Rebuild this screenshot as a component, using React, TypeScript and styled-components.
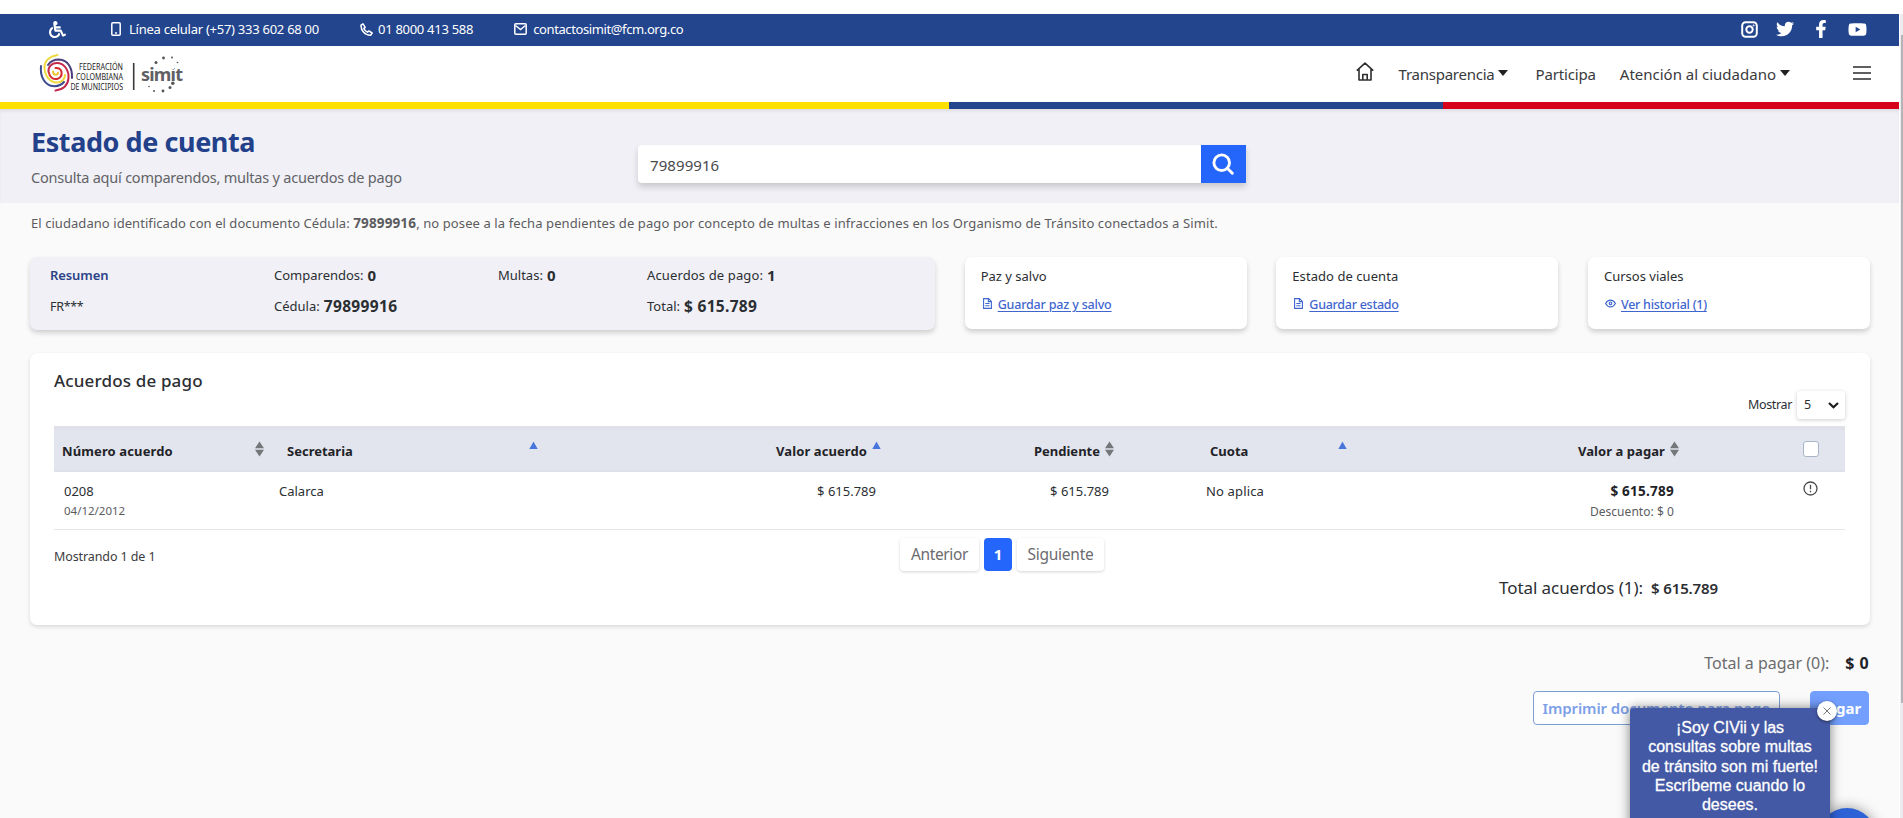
import React from "react";
import styled, { createGlobalStyle, css } from "styled-components";
import { FaWheelchair, FaTwitter, FaFacebookF, FaYoutube } from "react-icons/fa";

const GlobalStyle = createGlobalStyle`
  * { box-sizing: border-box; }
  body { margin: 0; background: #fff; overflow: hidden; }
  button { font: inherit; border: 0; padding: 0; background: none; }
`;

const Screen = styled.div`
  width: 1903px;
  height: 818px;
  display: flex;
  overflow: hidden;
  padding-top: 14px;
  font-family: "Noto Sans", "Open Sans", sans-serif;
  color: #2b2e32;
`;
const Page = styled.div`
  position: relative;
  width: 1900px;
  display: flex;
  flex-direction: column;
  background: #fafafa;
  border-right: 1px solid #fff;
`;
const ScrollTrack = styled.div`
  width: 3px;
  background: #ececee;
  padding-top: 21px;
`;
const ScrollThumb = styled.div`
  height: 668px;
  margin-left: 1px;
  background: #b4b4b6;
`;

const Text = styled.span<{ $size: number; $weight?: number; $track?: number; $color?: string }>`
  font-size: ${(p) => p.$size}px;
  font-weight: ${(p) => p.$weight ?? 400};
  letter-spacing: ${(p) => p.$track ?? 0}px;
  color: ${(p) => p.$color ?? "inherit"};
  line-height: 1.4;
  white-space: nowrap;
`;

/* ---------- Header ---------- */
const TopBar = styled.div`
  height: 32px;
  background: #22458d;
  color: #fff;
  display: flex;
  align-items: center;
  justify-content: space-between;
  padding: 0 32px 2px 49px;
`;
const Contacts = styled.div`
  display: flex;
  align-items: center;
  svg { display: block; }
`;
const Contact = styled.div<{ $gap: number; $left: number }>`
  display: flex;
  align-items: center;
  gap: ${(p) => p.$gap}px;
  margin-left: ${(p) => p.$left}px;
`;
const Social = styled.div`
  display: flex;
  align-items: center;
  gap: 18px;
  svg { display: block; }
`;
const Nav = styled.div`
  height: 56px;
  background: #fff;
  display: flex;
  align-items: center;
  justify-content: space-between;
  padding: 0 28px 0 38px;
`;
const LogoArt = styled.svg`
  overflow: visible;
`;
const NavLinks = styled.nav`
  display: flex;
  align-items: center;
`;
const HomeIcon = styled.svg`
  margin: -6px 25px 0 0;
`;
const NavItem = styled.a<{ $right: number }>`
  display: flex;
  align-items: center;
  gap: 4px;
  margin-right: ${(p) => p.$right}px;
  color: #3a3a3d;
`;
const Caret = styled.i`
  border: 5px solid transparent;
  border-top: 6px solid #222;
  border-bottom: 0;
  margin-top: -2px;
`;
const Burger = styled.div`
  width: 18px;
  height: 14px;
  display: flex;
  flex-direction: column;
  justify-content: space-between;
  margin-top: -2px;
`;
const BurgerLine = styled.i`
  height: 2px;
  background: #5f5f61;
`;
const Flag = styled.div`
  height: 7px;
  display: grid;
  grid-template-columns: 949px 494px 1fr;
`;
const Stripe = styled.i<{ $color: string }>`
  background: ${(p) => p.$color};
`;

/* ---------- Search banner ---------- */
const Banner = styled.section`
  height: 94px;
  background: #f0f0f6;
  box-shadow: inset 0 3px 4px -2px rgba(0, 0, 0, 0.12);
  display: flex;
  padding-left: 31px;
`;
const BannerTitle = styled.div`
  width: 607px;
  padding-top: 14px;
  display: flex;
  flex-direction: column;
  gap: 6px;
`;
const SearchBox = styled.div`
  width: 608px;
  height: 38px;
  margin-top: 36px;
  display: flex;
  background: #fff;
  border-radius: 4px 0 0 4px;
  box-shadow: 0 4px 6px rgba(0, 0, 0, 0.17);
`;
const SearchValue = styled.div`
  flex: 1;
  display: flex;
  align-items: center;
  padding: 2px 12px 0;
`;
const SearchButton = styled.button`
  width: 45px;
  display: flex;
  align-items: center;
  justify-content: center;
  padding-right: 2px;
  background: #2466fb;
`;

/* ---------- Content ---------- */
const Content = styled.main`
  padding: 0 29px 0 30px;
`;
const Notice = styled.div`
  height: 54px;
  padding: 10px 0 0 1px;
  color: #5c5c5f;
  white-space: nowrap;
  line-height: 18px;
`;
const Cards = styled.div`
  display: flex;
  justify-content: space-between;
`;
const cardBase = css`
  border-radius: 7px;
  box-shadow: 0 3px 5px rgba(0, 0, 0, 0.17);
`;
const Summary = styled.div`
  ${cardBase}
  width: 905px;
  height: 73px;
  background: #f0f0f6;
  padding: 3px 20px 0;
  display: grid;
  grid-template-columns: 224px 224px 149px 1fr;
  grid-auto-rows: 31px;
`;
const SummaryItem = styled.div`
  display: flex;
  align-items: center;
  gap: 4px;
`;
const Card = styled.div`
  ${cardBase}
  width: 282px;
  height: 72px;
  background: #fff;
  padding: 10px 16px 0;
  display: flex;
  flex-direction: column;
  gap: 11px;
`;
const CardLink = styled.a<{ $gap?: number; $left?: number }>`
  display: flex;
  align-items: center;
  gap: ${(p) => p.$gap ?? 6}px;
  padding-left: ${(p) => p.$left ?? 2}px;
  color: #3f66cf;
  svg { display: block; margin-top: -3px; }
  span { text-decoration: underline; text-underline-offset: 2px; }
`;
const Panel = styled.section`
  height: 272px;
  margin-top: 23px;
  background: #fff;
  border-radius: 7px;
  box-shadow: 0 2px 4px rgba(0, 0, 0, 0.13);
  padding: 16px 25px 0 24px;
`;
const PanelHead = styled.div`
  height: 57px;
  display: flex;
  justify-content: space-between;
`;
const PageSize = styled.label`
  height: 28px;
  margin-top: 22px;
  display: flex;
  align-items: center;
  gap: 5px;
`;
const Select = styled.div`
  width: 48px;
  height: 28px;
  padding: 0 6px 0 7px;
  display: flex;
  align-items: center;
  justify-content: space-between;
  border-radius: 3px;
  box-shadow: 0 1px 4px rgba(0, 0, 0, 0.2);
  background: #fff;
`;

const gridColumns = css`
  display: grid;
  grid-template-columns: 225px 266px 343px 232px 233px 331px 161px;
`;
const HeadRow = styled.div`
  ${gridColumns}
  height: 46px;
  background: #e2e5ee;
  border-top: 4px solid #e0e0e8;
  border-bottom: 2px solid #e0e0ea;
  color: #1f2327;
`;
const HeadCell = styled.div<{ $left?: number; $right?: number; $end?: boolean }>`
  display: flex;
  align-items: center;
  justify-content: ${(p) => (p.$end ? "flex-end" : "space-between")};
  gap: 5px;
  padding: 2px ${(p) => p.$right ?? 0}px 0 ${(p) => p.$left ?? 0}px;
`;
const BodyRow = styled.div`
  ${gridColumns}
  height: 58px;
  border-bottom: 1px solid #e6e6e8;
`;
const BodyCell = styled.div<{ $left?: number; $right?: number; $end?: boolean }>`
  display: flex;
  flex-direction: column;
  align-items: ${(p) => (p.$end ? "flex-end" : "flex-start")};
  gap: 3px;
  padding: 10px ${(p) => p.$right ?? 0}px 0 ${(p) => p.$left ?? 0}px;
`;
const SortMark = styled.svg`
  display: block;
  margin-top: -4px;
`;
const Checkbox = styled.i`
  width: 16px;
  height: 16px;
  margin-top: -5px;
  border: 1px solid #a9b6c8;
  border-radius: 3px;
  background: #fff;
`;
const AlertIcon = styled.svg`
  margin-top: -1px;
`;
const PanelFoot = styled.div`
  display: grid;
  grid-template-columns: 846px 1fr;
  height: 41px;
  padding-top: 8px;
`;
const Count = styled.div`
  padding-top: 10px;
  display: flex;
  align-items: flex-start;
`;
const Pager = styled.div`
  display: flex;
  gap: 5px;
`;
const PageButton = styled.button<{ $width: number; $active?: boolean }>`
  width: ${(p) => p.$width}px;
  height: 33px;
  display: flex;
  align-items: center;
  justify-content: center;
  border-radius: 4px;
  background: ${(p) => (p.$active ? "#2466fb" : "#fff")};
  box-shadow: ${(p) => (p.$active ? "none" : "0 1px 3px rgba(0,0,0,0.17)")};
`;
const PanelTotal = styled.div`
  height: 34px;
  padding-right: 127px;
  display: flex;
  align-items: center;
  justify-content: flex-end;
  gap: 8px;
`;
const GrandTotal = styled.div`
  height: 66px;
  padding: 10px 1px 0 0;
  display: flex;
  align-items: center;
  justify-content: flex-end;
  gap: 16px;
`;
const Actions = styled.div`
  display: flex;
  justify-content: flex-end;
  padding-right: 1px;
  gap: 30px;
`;
const ActionButton = styled.button<{ $width: number; $solid?: boolean }>`
  width: ${(p) => p.$width}px;
  height: 34px;
  border-radius: 4px;
  border: 1px solid ${(p) => (p.$solid ? "#739fff" : "#7f9ed2")};
  background: ${(p) => (p.$solid ? "#739fff" : "#fff")};
  color: ${(p) => (p.$solid ? "#fff" : "#7d9fe8")};
`;

/* ---------- Chat bubble ---------- */
const ChatTip = styled.aside`
  position: absolute;
  left: 1630px;
  top: 694px;
  width: 200px;
  height: 130px;
  padding: 10px 8px 0;
  background: #4459a5;
  border-radius: 4px;
  box-shadow: 0 0 12px rgba(0, 0, 0, 0.5);
  color: #fff;
  font: 16px/19.3px "Liberation Sans", Arial, sans-serif;
  text-align: center;
`;
const ChatLine = styled.div`
  white-space: nowrap;
  -webkit-text-stroke: 0.3px #fff;
`;
const ChatClose = styled.button`
  position: absolute;
  right: -7px;
  top: -7px;
  width: 20px;
  height: 20px;
  display: flex;
  align-items: center;
  justify-content: center;
  border-radius: 50%;
  background: #fff;
  box-shadow: 0 1px 3px rgba(0, 0, 0, 0.5);
`;
const ChatLauncher = styled.div`
  position: absolute;
  left: 1818px;
  top: 794px;
  width: 58px;
  height: 58px;
  border-radius: 50%;
  background: #2d62d6;
  box-shadow: 0 0 14px rgba(0, 0, 0, 0.4);
`;

const Logo = () => (
  <LogoArt width="150" height="48" viewBox="38 50 150 48">
    <g fill="none" strokeWidth="2" strokeLinecap="round">
      <path d="M57.500 55C50 56 44.500 60.500 44.500 67C44.500 76 50 82.500 57 82.500C62 82.500 65 79 65 75" stroke="#ecd93c" />
      <path d="M41 66C40 75 43.500 83 50 85.500C56 87 61 85.500 64 82" stroke="#3a4a8c" />
      <path d="M55.500 90.500C63 89.500 68 85 68.500 78C69 70 64 63 57 63C51.500 63 48 67 48.500 72" stroke="#c4284a" />
      <path d="M72 78C72.500 68 68 60 59 59.500C54 59.500 50 62 48 65" stroke="#4b3f7c" />
      <path d="M49 73C49.500 77 53 79.500 57 79C60.500 78 62 75 61.500 72C61 69 58 67.500 55.500 68" stroke="#d42b2b" />
      <path d="M53 71.500C53 75 57.500 76 58 72.800" stroke="#ecc52e" />
    </g>
    <g fontFamily="Noto Sans, sans-serif" fontSize="8" fontWeight="400" fill="#1e1e1e">
      <text x="79" y="70" textLength="44" lengthAdjust="spacingAndGlyphs">FEDERACIÓN</text>
      <text x="76" y="80" textLength="47" lengthAdjust="spacingAndGlyphs">COLOMBIANA</text>
      <text x="70.500" y="90" textLength="52.500" lengthAdjust="spacingAndGlyphs">DE MUNICIPIOS</text>
    </g>
    <path d="M133.700 63v27" stroke="#3a3a3a" strokeWidth="1.600" />
    <text x="141" y="80.500" textLength="42" lengthAdjust="spacing" fontFamily="Noto Sans, sans-serif" fontSize="18" fontWeight="700" fill="#606064">simit</text>
    <circle cx="172.800" cy="67.300" r="2" fill="#fff" />
    <g fill="#555">
      <circle cx="172.800" cy="83.200" r="1.700" />
      <circle cx="156" cy="62.500" r="1.500" />
      <circle cx="163.500" cy="58" r="1.400" />
      <circle cx="172" cy="57.500" r="1" />
      <circle cx="177.500" cy="62.500" r="0.800" />
      <circle cx="170" cy="87.500" r="1.500" />
      <circle cx="163" cy="91" r="1.400" />
      <circle cx="154" cy="91" r="1" />
      <circle cx="149" cy="86.500" r="0.800" />
    </g>
  </LogoArt>
);

const Sort = ({ up }: { up?: boolean }) =>
  up ? (
    <SortMark width="9" height="20" viewBox="0 0 9 20">
      <path d="M4.500 2.500L8.700 10H.3z" fill="#4775dc" />
    </SortMark>
  ) : (
    <SortMark width="9" height="20" viewBox="0 0 9 20">
      <path d="M4.500 2.500L9 9.300H0zM0 10.700h9L4.500 17.500z" fill="#74767a" />
    </SortMark>
  );

const DocIcon = () => (
  <svg width="9" height="11" viewBox="0 0 9 11" fill="none" stroke="#3f66cf" strokeWidth="1.100">
    <path d="M.6.6h5l2.800 2.800v7H.6zM5.300.6v3h3M2.300 5.500h4.200M2.300 7.800h4.200" />
  </svg>
);
const EyeIcon = () => (
  <svg width="11" height="9" viewBox="0 0 11 9" fill="none" stroke="#3f66cf" strokeWidth="1.100">
    <path d="M.6 4.500C3 0 8 0 10.400 4.500C8 9 3 9 .6 4.500z" />
    <circle cx="5.500" cy="4.300" r="1.300" />
  </svg>
);

const HeadLabel = (p: { children: string; track?: number }) => (
  <Text $size={13} $weight={700} $track={p.track}>{p.children}</Text>
);

export default function App() {
  return (
    <Screen>
      <GlobalStyle />
      <Page>
        <TopBar>
          <Contacts>
            <FaWheelchair size={17} />
            <Contact $left={45} $gap={8}>
              <svg width="10" height="14" viewBox="0 0 10 14" fill="none" stroke="#fff" strokeWidth="1.500">
                <rect x=".8" y=".8" width="8.400" height="12.400" rx="1" />
                <path d="M4 11h2" />
              </svg>
              <Text $size={13} $track={-0.26}>Línea celular (+57) 333 602 68 00</Text>
            </Contact>
            <Contact $left={41} $gap={5}>
              <svg width="13" height="13" viewBox="0 0 13 13" fill="none" stroke="#fff" strokeWidth="1.500" strokeLinejoin="round">
                <path d="M1 2.200L3 .9L5.200 4.300L3.800 5.600Q5.200 8 7.500 9.200L8.900 7.900L12.100 10L10.800 12.200C5 12.500.8 7.500 1 2.200z" />
              </svg>
              <Text $size={13} $track={-0.28}>01 8000 413 588</Text>
            </Contact>
            <Contact $left={41} $gap={6}>
              <svg width="13" height="12" viewBox="0 0 13 12" fill="none" stroke="#fff" strokeWidth="1.500">
                <rect x=".8" y=".8" width="11.400" height="10.400" rx="1" />
                <path d="M1.500 2.500L6.500 6.500L11.500 2.500" />
              </svg>
              <Text $size={13} $track={-0.39}>contactosimit@fcm.org.co</Text>
            </Contact>
          </Contacts>
          <Social>
            <svg width="17" height="17" viewBox="0 0 17 17" fill="none" stroke="#fff" strokeWidth="2">
              <rect x="1.200" y="1.200" width="14.600" height="14.600" rx="3.500" />
              <circle cx="8.500" cy="8.500" r="3.200" />
              <circle cx="12.600" cy="4.400" r=".6" strokeWidth="1" />
            </svg>
            <FaTwitter size={18} />
            <FaFacebookF size={18} />
            <FaYoutube size={19} />
          </Social>
        </TopBar>
        <Nav>
          <Logo />
          <NavLinks>
            <HomeIcon width="18" height="19" viewBox="0 0 18 19" fill="none" stroke="#2e2e30" strokeWidth="1.600" strokeLinejoin="round">
              <path d="M.8 8.700L9 1.200L17.200 8.700M3 7v11h12V7M6.800 18v-5.500h4.400V18" />
            </HomeIcon>
            <NavItem $right={27}>
              <Text $size={15} $track={-0.25}>Transparencia</Text>
              <Caret />
            </NavItem>
            <NavItem $right={24}>
              <Text $size={15} $track={-0.15}>Participa</Text>
            </NavItem>
            <NavItem $right={63}>
              <Text $size={15}>Atención al ciudadano</Text>
              <Caret />
            </NavItem>
            <Burger>
              <BurgerLine />
              <BurgerLine />
              <BurgerLine />
            </Burger>
          </NavLinks>
        </Nav>
        <Flag>
          <Stripe $color="#ffe000" />
          <Stripe $color="#22458d" />
          <Stripe $color="#d6001a" />
        </Flag>
        <Banner>
          <BannerTitle>
            <Text $size={27} $weight={700} $track={-0.42} $color="#22418a">Estado de cuenta</Text>
            <Text $size={14.500} $track={-0.22} $color="#636366">Consulta aquí comparendos, multas y acuerdos de pago</Text>
          </BannerTitle>
          <SearchBox>
            <SearchValue>
              <Text $size={15} $track={0.08} $color="#4a4a4d">79899916</Text>
            </SearchValue>
            <SearchButton aria-label="Buscar">
              <svg width="22" height="22" viewBox="0 0 22 22" fill="none" stroke="#fff" strokeWidth="2.900">
                <circle cx="9.700" cy="9.700" r="7.800" />
                <path d="M15.300 15.300L20.300 20.300" strokeLinecap="round" />
              </svg>
            </SearchButton>
          </SearchBox>
        </Banner>
        <Content>
          <Notice>
            <Text $size={13} $track={0.06}>El ciudadano identificado con el documento Cédula: </Text>
            <Text $size={13.500} $weight={700} $track={0.15}>79899916</Text>
            <Text $size={13} $track={0.1}>, no posee a la fecha pendientes de pago por concepto de multas e infracciones en los Organismo de Tránsito conectados a Simit.</Text>
          </Notice>
          <Cards>
            <Summary>
              <SummaryItem><Text $size={13} $weight={600} $track={-0.1} $color="#2c4386">Resumen</Text></SummaryItem>
              <SummaryItem><Text $size={13}>Comparendos:</Text><Text $size={15} $weight={700}>0</Text></SummaryItem>
              <SummaryItem><Text $size={13}>Multas:</Text><Text $size={15} $weight={700}>0</Text></SummaryItem>
              <SummaryItem><Text $size={13} $track={0.13}>Acuerdos de pago:</Text><Text $size={15} $weight={700}>1</Text></SummaryItem>
              <SummaryItem><Text $size={12.500} $track={-0.3}>FR***</Text></SummaryItem>
              <SummaryItem><Text $size={13}>Cédula:</Text><Text $size={15.500} $weight={700} $track={0.35}>79899916</Text></SummaryItem>
              <SummaryItem />
              <SummaryItem><Text $size={13}>Total:</Text><Text $size={15.500} $weight={700} $track={0.3}>$ 615.789</Text></SummaryItem>
            </Summary>
            <Card>
              <Text $size={13}>Paz y salvo</Text>
              <CardLink><DocIcon /><Text $size={12.500} $weight={550} $track={-0.18}>Guardar paz y salvo</Text></CardLink>
            </Card>
            <Card>
              <Text $size={13} $track={0.06}>Estado de cuenta</Text>
              <CardLink><DocIcon /><Text $size={12.500} $weight={550} $track={-0.27}>Guardar estado</Text></CardLink>
            </Card>
            <Card>
              <Text $size={13}>Cursos viales</Text>
              <CardLink $gap={5} $left={1}><EyeIcon /><Text $size={12.500} $weight={550} $track={-0.26}>Ver historial (1)</Text></CardLink>
            </Card>
          </Cards>
          <Panel>
            <PanelHead>
              <Text $size={17} $weight={530} $track={0.15}>Acuerdos de pago</Text>
              <PageSize>
                <Text $size={12.500} $track={-0.35}>Mostrar</Text>
                <Select>
                  <Text $size={12.500}>5</Text>
                  <svg width="11" height="7" viewBox="0 0 11 7" fill="none" stroke="#1c1c1c" strokeWidth="2.200"><path d="M1 1L5.500 5.300L10 1" /></svg>
                </Select>
              </PageSize>
            </PanelHead>
            <HeadRow>
              <HeadCell $left={8} $right={15}><HeadLabel track={0.12}>Número acuerdo</HeadLabel><Sort /></HeadCell>
              <HeadCell $left={8} $right={7}><HeadLabel>Secretaria</HeadLabel><Sort up /></HeadCell>
              <HeadCell $right={7} $end><HeadLabel track={0.09}>Valor acuerdo</HeadLabel><Sort up /></HeadCell>
              <HeadCell $right={6} $end><HeadLabel>Pendiente</HeadLabel><Sort /></HeadCell>
              <HeadCell $left={90} $right={6}><HeadLabel>Cuota</HeadLabel><Sort up /></HeadCell>
              <HeadCell $right={5} $end><HeadLabel track={0.07}>Valor a pagar</HeadLabel><Sort /></HeadCell>
              <HeadCell $right={26} $end><Checkbox /></HeadCell>
            </HeadRow>
            <BodyRow>
              <BodyCell $left={10}>
                <Text $size={13}>0208</Text>
                <Text $size={11.500} $color="#5c5c5f">04/12/2012</Text>
              </BodyCell>
              <BodyCell><Text $size={13}>Calarca</Text></BodyCell>
              <BodyCell $right={12} $end><Text $size={13}>$ 615.789</Text></BodyCell>
              <BodyCell $right={11} $end><Text $size={13}>$ 615.789</Text></BodyCell>
              <BodyCell $left={86}><Text $size={13} $track={0.15}>No aplica</Text></BodyCell>
              <BodyCell $right={10} $end>
                <Text $size={13.500} $weight={700} $track={0.25} $color="#1f2327">$ 615.789</Text>
                <Text $size={12} $track={0.05} $color="#5c5c5f">Descuento: $ 0</Text>
              </BodyCell>
              <BodyCell $right={27} $end>
                <AlertIcon width="15" height="15" viewBox="0 0 15 15" fill="none" stroke="#4b4b4b" strokeWidth="1.300">
                  <circle cx="7.500" cy="7.500" r="6.500" />
                  <path d="M7.500 3.700v4.600M7.500 9.700v1.500" />
                </AlertIcon>
              </BodyCell>
            </BodyRow>
            <PanelFoot>
              <Count><Text $size={12.500} $track={-0.1} $color="#3c3c3e">Mostrando 1 de 1</Text></Count>
              <Pager>
                <PageButton $width={79}><Text $size={15.500} $track={-0.38} $color="#6c6c6f">Anterior</Text></PageButton>
                <PageButton $width={28} $active><Text $size={15} $weight={700} $color="#fff">1</Text></PageButton>
                <PageButton $width={87}><Text $size={15.500} $track={-0.25} $color="#6c6c6f">Siguiente</Text></PageButton>
              </Pager>
            </PanelFoot>
            <PanelTotal>
              <Text $size={17} $track={-0.07}>Total acuerdos (1):</Text>
              <Text $size={15} $weight={600} $track={-0.12}>$ 615.789</Text>
            </PanelTotal>
          </Panel>
          <GrandTotal>
            <Text $size={16} $color="#6c6c6f">Total a pagar (0):</Text>
            <Text $size={16} $weight={700} $track={0.4} $color="#1f2327">$ 0</Text>
          </GrandTotal>
          <Actions>
            <ActionButton $width={247}><Text $size={15} $weight={600} $track={-0.1}>Imprimir documento para pago</Text></ActionButton>
            <ActionButton $width={59} $solid><Text $size={15} $weight={700}>Pagar</Text></ActionButton>
          </Actions>
        </Content>
        <ChatLauncher />
        <ChatTip>
          <ChatLine>¡Soy CIVii y las</ChatLine>
          <ChatLine>consultas sobre multas</ChatLine>
          <ChatLine>de tránsito son mi fuerte!</ChatLine>
          <ChatLine>Escríbeme cuando lo</ChatLine>
          <ChatLine>desees.</ChatLine>
          <ChatClose aria-label="Cerrar">
            <svg width="8" height="8" viewBox="0 0 8 8" stroke="#777" strokeWidth="1"><path d="M.5.5l7 7M7.500.5l-7 7" /></svg>
          </ChatClose>
        </ChatTip>
      </Page>
      <ScrollTrack><ScrollThumb /></ScrollTrack>
    </Screen>
  );
}
